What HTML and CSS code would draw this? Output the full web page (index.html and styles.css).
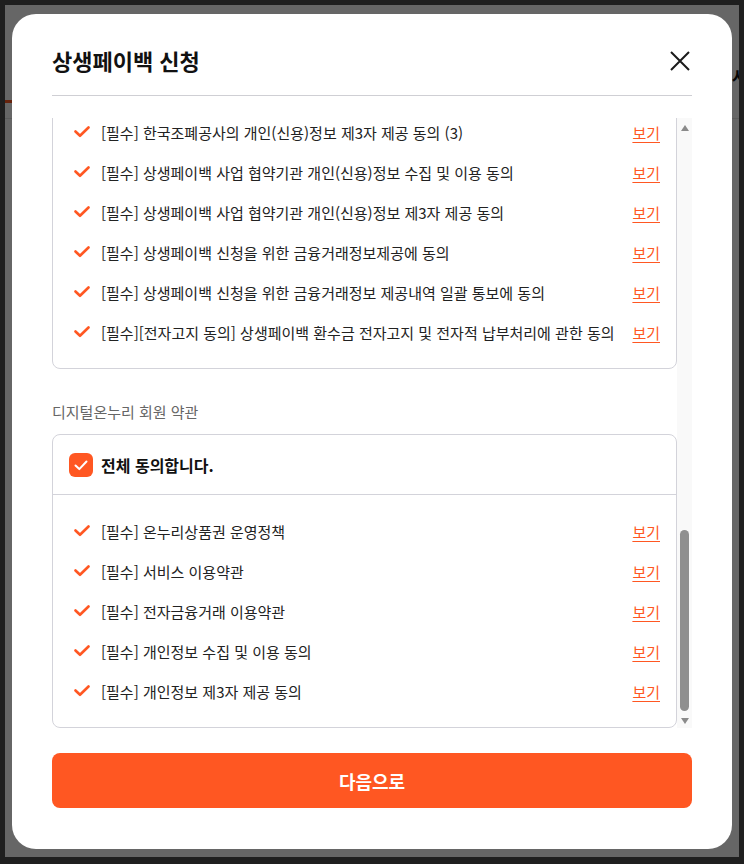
FILE: index.html
```html
<!DOCTYPE html>
<html lang="ko">
<head>
  <meta charset="UTF-8" />
  <meta name="viewport" content="width=device-width, initial-scale=1.0" />
  <title>상생페이백 신청</title>
  <link rel="stylesheet" href="styles.css">
</head>
<body>
  <div class="screen">
    <div class="page">
      <div class="page-header">
        <a class="page-tab active">홈</a>
        <span class="page-tab-right">시장</span>
      </div>
      <div class="page-subnav"></div>
    </div>

    <div class="overlay">
      <div class="modal">
        <div class="modal-header">
          <h2>상생페이백 신청</h2>
          <button class="close-btn" aria-label="닫기">
            <svg viewBox="0 0 24 24"><path d="M3 3L21 21M21 3L3 21" stroke="currentColor" stroke-width="2" fill="none"/></svg>
          </button>
        </div>

        <div class="terms-scroll">
          <div class="terms-content" id="termsContent">
            <div class="terms-section">
              <div class="terms-label">본인확인 약관</div>
              <div class="terms-box">
                <label class="terms-all">
                  <span class="checkbox"><svg viewBox="0 0 24 24"><path d="M6.5 12.5l3.8 3.6 7.2-7.6" stroke="#fff" stroke-width="2" fill="none" stroke-linecap="round" stroke-linejoin="round"/></svg></span>
                  전체 동의합니다.
                </label>
                <ul class="terms-list">
                  <li><svg class="check" viewBox="0 0 16 16"><path d="M1.5 7.5l4.5 4.3 8.5-8.3" /></svg><span class="terms-text">[필수] 휴대폰 본인확인 서비스 이용약관</span><a class="view-link">보기</a></li>
                  <li><svg class="check" viewBox="0 0 16 16"><path d="M1.5 7.5l4.5 4.3 8.5-8.3" /></svg><span class="terms-text">[필수] 본인확인 개인정보 수집 및 이용 동의</span><a class="view-link">보기</a></li>
                  <li><svg class="check" viewBox="0 0 16 16"><path d="M1.5 7.5l4.5 4.3 8.5-8.3" /></svg><span class="terms-text">[필수] 고유식별정보 처리 동의</span><a class="view-link">보기</a></li>
                  <li><svg class="check" viewBox="0 0 16 16"><path d="M1.5 7.5l4.5 4.3 8.5-8.3" /></svg><span class="terms-text">[필수] 통신사 이용약관 동의</span><a class="view-link">보기</a></li>
                  <li><svg class="check" viewBox="0 0 16 16"><path d="M1.5 7.5l4.5 4.3 8.5-8.3" /></svg><span class="terms-text">[필수] 본인확인 개인정보 제3자 제공 동의</span><a class="view-link">보기</a></li>
                  <li><svg class="check" viewBox="0 0 16 16"><path d="M1.5 7.5l4.5 4.3 8.5-8.3" /></svg><span class="terms-text">[필수] 전자금융거래 기본약관</span><a class="view-link">보기</a></li>
                  <li><svg class="check" viewBox="0 0 16 16"><path d="M1.5 7.5l4.5 4.3 8.5-8.3" /></svg><span class="terms-text">[필수] 카드 정보 조회 동의</span><a class="view-link">보기</a></li>
                  <li><svg class="check" viewBox="0 0 16 16"><path d="M1.5 7.5l4.5 4.3 8.5-8.3" /></svg><span class="terms-text">[필수] 카드사 개인(신용)정보 수집 및 이용 동의</span><a class="view-link">보기</a></li>
                  <li><svg class="check" viewBox="0 0 16 16"><path d="M1.5 7.5l4.5 4.3 8.5-8.3" /></svg><span class="terms-text">[필수] 카드사 개인(신용)정보 제3자 제공 동의</span><a class="view-link">보기</a></li>
                  <li><svg class="check" viewBox="0 0 16 16"><path d="M1.5 7.5l4.5 4.3 8.5-8.3" /></svg><span class="terms-text">[필수] 계좌 정보 조회 동의</span><a class="view-link">보기</a></li>
                  <li><svg class="check" viewBox="0 0 16 16"><path d="M1.5 7.5l4.5 4.3 8.5-8.3" /></svg><span class="terms-text">[필수] 소득 정보 조회 동의</span><a class="view-link">보기</a></li>
                </ul>
              </div>
            </div>

            <div class="terms-section">
              <div class="terms-label">상생페이백 약관</div>
              <div class="terms-box">
                <label class="terms-all">
                  <span class="checkbox"><svg viewBox="0 0 24 24"><path d="M6.5 12.5l3.8 3.6 7.2-7.6" stroke="#fff" stroke-width="2" fill="none" stroke-linecap="round" stroke-linejoin="round"/></svg></span>
                  전체 동의합니다.
                </label>
                <ul class="terms-list">
                  <li><svg class="check" viewBox="0 0 16 16"><path d="M1.5 7.5l4.5 4.3 8.5-8.3" /></svg><span class="terms-text">[필수] 상생페이백 이용약관</span><a class="view-link">보기</a></li>
                  <li><svg class="check" viewBox="0 0 16 16"><path d="M1.5 7.5l4.5 4.3 8.5-8.3" /></svg><span class="terms-text">[필수] 상생페이백 개인정보 수집 및 이용 동의</span><a class="view-link">보기</a></li>
                  <li><svg class="check" viewBox="0 0 16 16"><path d="M1.5 7.5l4.5 4.3 8.5-8.3" /></svg><span class="terms-text">[필수] 고유식별정보 처리 동의</span><a class="view-link">보기</a></li>
                  <li><svg class="check" viewBox="0 0 16 16"><path d="M1.5 7.5l4.5 4.3 8.5-8.3" /></svg><span class="terms-text">[필수] 개인(신용)정보 조회 동의</span><a class="view-link">보기</a></li>
                  <li><svg class="check" viewBox="0 0 16 16"><path d="M1.5 7.5l4.5 4.3 8.5-8.3" /></svg><span class="terms-text">[필수] 개인(신용)정보 수집 및 이용 동의</span><a class="view-link">보기</a></li>
                  <li><svg class="check" viewBox="0 0 16 16"><path d="M1.5 7.5l4.5 4.3 8.5-8.3" /></svg><span class="terms-text">[필수] 개인(신용)정보 제공 동의</span><a class="view-link">보기</a></li>
                  <li><svg class="check" viewBox="0 0 16 16"><path d="M1.5 7.5l4.5 4.3 8.5-8.3" /></svg><span class="terms-text">[필수] 카드사 개인(신용)정보 제3자 제공 동의 (1)</span><a class="view-link">보기</a></li>
                  <li><svg class="check" viewBox="0 0 16 16"><path d="M1.5 7.5l4.5 4.3 8.5-8.3" /></svg><span class="terms-text">[필수] 카드사 개인(신용)정보 제3자 제공 동의 (2)</span><a class="view-link">보기</a></li>
                  <li><svg class="check" viewBox="0 0 16 16"><path d="M1.5 7.5l4.5 4.3 8.5-8.3" /></svg><span class="terms-text">[필수] 카드사 개인(신용)정보 제3자 제공 동의 (3)</span><a class="view-link">보기</a></li>
                  <li><svg class="check" viewBox="0 0 16 16"><path d="M1.5 7.5l4.5 4.3 8.5-8.3" /></svg><span class="terms-text">[필수] 행정안전부 개인(신용)정보 제3자 제공 동의</span><a class="view-link">보기</a></li>
                  <li><svg class="check" viewBox="0 0 16 16"><path d="M1.5 7.5l4.5 4.3 8.5-8.3" /></svg><span class="terms-text">[필수] 중소벤처기업부 개인(신용)정보 제3자 제공 동의</span><a class="view-link">보기</a></li>
                  <li><svg class="check" viewBox="0 0 16 16"><path d="M1.5 7.5l4.5 4.3 8.5-8.3" /></svg><span class="terms-text">[필수] 소상공인시장진흥공단 개인(신용)정보 제3자 제공 동의</span><a class="view-link">보기</a></li>
                  <li><svg class="check" viewBox="0 0 16 16"><path d="M1.5 7.5l4.5 4.3 8.5-8.3" /></svg><span class="terms-text">[필수] 한국조폐공사의 개인(신용)정보 수집 및 이용 동의</span><a class="view-link">보기</a></li>
                  <li><svg class="check" viewBox="0 0 16 16"><path d="M1.5 7.5l4.5 4.3 8.5-8.3" /></svg><span class="terms-text">[필수] 한국조폐공사의 개인(신용)정보 제3자 제공 동의 (1)</span><a class="view-link">보기</a></li>
                  <li><svg class="check" viewBox="0 0 16 16"><path d="M1.5 7.5l4.5 4.3 8.5-8.3" /></svg><span class="terms-text">[필수] 한국조폐공사의 개인(신용)정보 제3자 제공 동의 (2)</span><a class="view-link">보기</a></li>
                  <li><svg class="check" viewBox="0 0 16 16"><path d="M1.5 7.5l4.5 4.3 8.5-8.3" /></svg><span class="terms-text">[필수] 한국조폐공사의 개인(신용)정보 제3자 제공 동의 (3)</span><a class="view-link">보기</a></li>
                  <li><svg class="check" viewBox="0 0 16 16"><path d="M1.5 7.5l4.5 4.3 8.5-8.3" /></svg><span class="terms-text">[필수] 상생페이백 사업 협약기관 개인(신용)정보 수집 및 이용 동의</span><a class="view-link">보기</a></li>
                  <li><svg class="check" viewBox="0 0 16 16"><path d="M1.5 7.5l4.5 4.3 8.5-8.3" /></svg><span class="terms-text">[필수] 상생페이백 사업 협약기관 개인(신용)정보 제3자 제공 동의</span><a class="view-link">보기</a></li>
                  <li><svg class="check" viewBox="0 0 16 16"><path d="M1.5 7.5l4.5 4.3 8.5-8.3" /></svg><span class="terms-text">[필수] 상생페이백 신청을 위한 금융거래정보제공에 동의</span><a class="view-link">보기</a></li>
                  <li><svg class="check" viewBox="0 0 16 16"><path d="M1.5 7.5l4.5 4.3 8.5-8.3" /></svg><span class="terms-text">[필수] 상생페이백 신청을 위한 금융거래정보 제공내역 일괄 통보에 동의</span><a class="view-link">보기</a></li>
                  <li><svg class="check" viewBox="0 0 16 16"><path d="M1.5 7.5l4.5 4.3 8.5-8.3" /></svg><span class="terms-text">[필수][전자고지 동의] 상생페이백 환수금 전자고지 및 전자적 납부처리에 관한 동의</span><a class="view-link">보기</a></li>
                </ul>
              </div>
            </div>

            <div class="terms-section">
              <div class="terms-label">디지털온누리 회원 약관</div>
              <div class="terms-box">
                <label class="terms-all">
                  <span class="checkbox"><svg viewBox="0 0 24 24"><path d="M6.5 12.5l3.8 3.6 7.2-7.6" stroke="#fff" stroke-width="2" fill="none" stroke-linecap="round" stroke-linejoin="round"/></svg></span>
                  전체 동의합니다.
                </label>
                <ul class="terms-list">
                  <li><svg class="check" viewBox="0 0 16 16"><path d="M1.5 7.5l4.5 4.3 8.5-8.3" /></svg><span class="terms-text">[필수] 온누리상품권 운영정책</span><a class="view-link">보기</a></li>
                  <li><svg class="check" viewBox="0 0 16 16"><path d="M1.5 7.5l4.5 4.3 8.5-8.3" /></svg><span class="terms-text">[필수] 서비스 이용약관</span><a class="view-link">보기</a></li>
                  <li><svg class="check" viewBox="0 0 16 16"><path d="M1.5 7.5l4.5 4.3 8.5-8.3" /></svg><span class="terms-text">[필수] 전자금융거래 이용약관</span><a class="view-link">보기</a></li>
                  <li><svg class="check" viewBox="0 0 16 16"><path d="M1.5 7.5l4.5 4.3 8.5-8.3" /></svg><span class="terms-text">[필수] 개인정보 수집 및 이용 동의</span><a class="view-link">보기</a></li>
                  <li><svg class="check" viewBox="0 0 16 16"><path d="M1.5 7.5l4.5 4.3 8.5-8.3" /></svg><span class="terms-text">[필수] 개인정보 제3자 제공 동의</span><a class="view-link">보기</a></li>
                </ul>
              </div>
            </div>
          </div>

          <div class="scrollbar">
            <span class="scroll-arrow up"></span>
            <div class="scroll-track"><div class="scroll-thumb"></div></div>
            <span class="scroll-arrow down"></span>
          </div>
        </div>

        <button class="next-btn">다음으로</button>
      </div>
    </div>
  </div>

  <script>
    const termsContent = document.getElementById("termsContent");
    termsContent.scrollTop = termsContent.scrollHeight;
  </script>
</body>
</html>
```

FILE: styles.css
```css
body {
  margin: 0;
  padding: 5px 5px 7px 5px;
  background: #1f1f1f;
  font-family: "Noto Sans CJK KR", "Noto Sans", sans-serif;
  color: #222;
}

.screen {
  position: relative;
  height: 852px;
  overflow: hidden;
  background: #fff;
}

/* page behind the dimmed overlay */
.page-header {
  display: flex;
  justify-content: space-between;
  align-items: flex-end;
  height: 98px;
}

.page-tab {
  display: block;
  padding: 0 20px 6px;
  font-size: 16px;
  font-weight: bold;
  border-bottom: 3px solid #ff5722;
}

.page-tab-right {
  margin: 0 -24px 15px 0;
  font-size: 17px;
  font-weight: bold;
  color: #111;
}

.page-subnav {
  height: 15px;
  border-bottom: 1px solid #e4e4e4;
}

.overlay {
  position: absolute;
  inset: 0;
  background: rgba(0, 0, 0, 0.6);
  padding: 9px 7px 8px 7px;
}

.modal {
  display: flex;
  flex-direction: column;
  width: 720px;
  height: 835px;
  box-sizing: border-box;
  padding: 0 40px 41px;
  background: #fff;
  border-radius: 24px;
}

.modal-header {
  display: flex;
  justify-content: space-between;
  align-items: center;
  padding: 31px 0 20px;
  border-bottom: 1px solid #cfcfd4;
}

.modal-header h2 {
  margin: 0;
  font-size: 22px;
  line-height: 30px;
  font-weight: bold;
  color: #111;
}

.close-btn {
  display: flex;
  width: 24px;
  height: 24px;
  margin: 2px 0 0 0;
  padding: 0;
  border: none;
  background: none;
  color: #1a1a1a;
}

.close-btn svg {
  width: 24px;
  height: 24px;
}

.terms-scroll {
  display: flex;
  margin-top: 22px;
  height: 610px;
  flex-shrink: 0;
}

.terms-content {
  flex: 1;
  overflow-y: auto;
  scrollbar-width: none;
}

.terms-content::-webkit-scrollbar {
  display: none;
}

.scrollbar {
  display: flex;
  flex-direction: column;
  align-items: center;
  width: 15px;
  padding: 7px 0 4px;
  box-sizing: border-box;
  background: #f9f9f9;
}

.scroll-arrow {
  width: 0;
  height: 0;
  border-left: 4.5px solid transparent;
  border-right: 4.5px solid transparent;
}

.scroll-arrow.up {
  border-bottom: 6px solid #8a8a8a;
}

.scroll-arrow.down {
  margin-top: 7px;
  border-top: 6px solid #8a8a8a;
}

.scroll-track {
  flex: 1;
  display: flex;
  flex-direction: column;
  justify-content: flex-end;
}

.scroll-thumb {
  width: 9px;
  height: 181px;
  border-radius: 5px;
  background: #8f8f8f;
}

.terms-section + .terms-section {
  margin-top: 33px;
}

.terms-label {
  font-size: 15px;
  line-height: 20px;
  color: #666;
  margin-bottom: 12px;
}

.terms-box {
  border: 1px solid #d3d3da;
  border-radius: 8px;
}

.terms-all {
  display: flex;
  align-items: center;
  gap: 8px;
  height: 59px;
  padding-left: 16px;
  border-bottom: 1px solid #d3d3da;
  font-size: 16px;
  font-weight: bold;
  color: #111;
}

.checkbox {
  display: flex;
  width: 24px;
  height: 24px;
  border-radius: 6px;
  background: #ff5722;
}

.checkbox svg {
  width: 24px;
  height: 24px;
}

.terms-list {
  list-style: none;
  margin: 0;
  padding: 16px 16px 16px 21px;
}

.terms-list li {
  display: flex;
  align-items: center;
  height: 40px;
}

.check {
  width: 16px;
  height: 16px;
  margin-right: 11px;
  fill: none;
  stroke: #ff5722;
  stroke-width: 2.6;
  stroke-linecap: round;
  stroke-linejoin: round;
  flex-shrink: 0;
}

.terms-text {
  flex: 1;
  font-size: 15px;
  color: #222;
  white-space: nowrap;
}

.view-link {
  font-size: 15px;
  color: #ff5722;
  text-decoration: underline;
  text-underline-offset: 3px;
  cursor: pointer;
}

.next-btn {
  margin-top: 25px;
  height: 55px;
  border: none;
  border-radius: 8px;
  background: #ff5722;
  color: #fff;
  font-family: inherit;
  font-size: 18px;
  font-weight: bold;
}
```
